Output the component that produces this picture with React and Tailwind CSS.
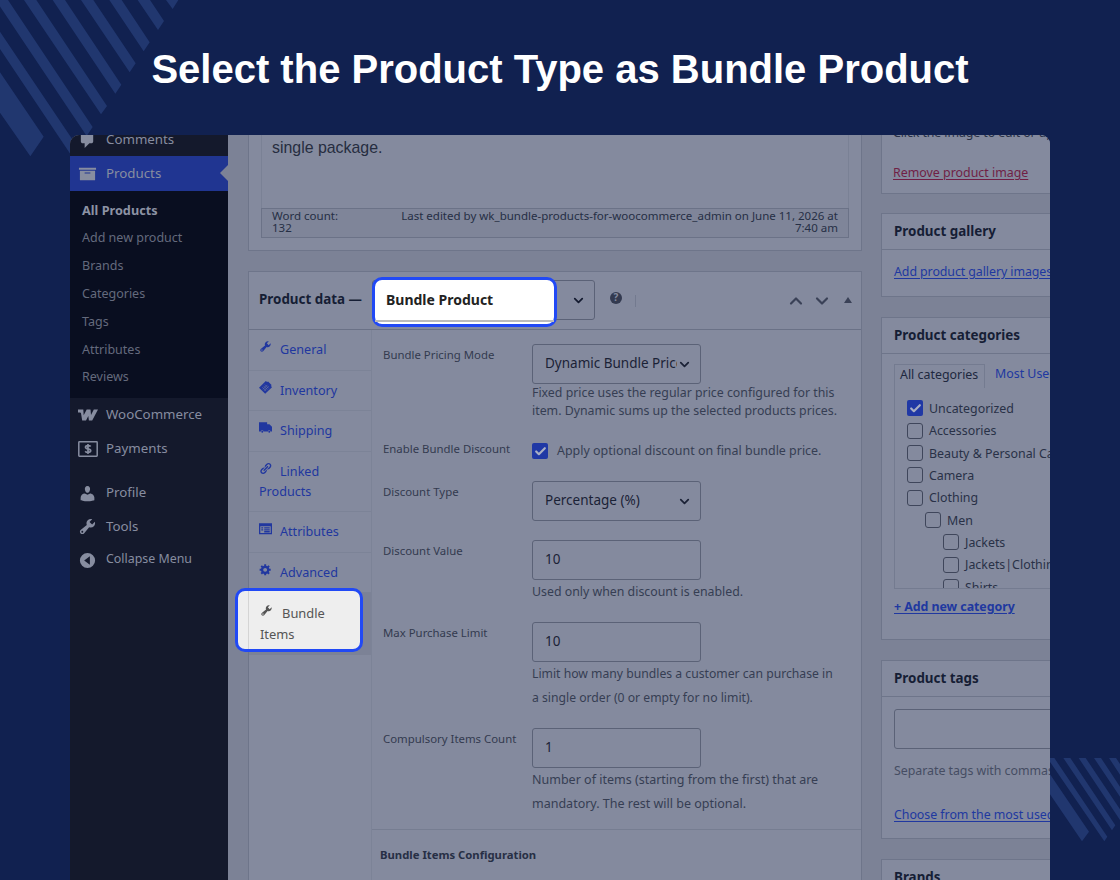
import { ChevronDown, ChevronUp, Check } from "lucide-react";

const ICONS = {
  comments: "M5 2h9q.82 0 1.41.59T16 4v7q0 .82-.59 1.41T14 13h-2l-5 5v-5H5q-.82 0-1.41-.59T3 11V4q0-.82.59-1.41T5 2z",
  archive: "M19 4v2H1V4h18zM2 7h16v10H2V7zm11 3V9H7v1h6z",
  user: "M10 9.25c-2.27 0-2.73-3.44-2.73-3.44C7 4.02 7.82 2 9.97 2c2.16 0 2.98 2.02 2.71 3.81 0 0-.41 3.44-2.68 3.44zM12.72 10c2.39 0 4.52 2.33 4.52 4.53v2.49s-3.65 1.13-7.24 1.13c-3.65 0-7.24-1.13-7.24-1.13v-2.49c0-2.25 1.94-4.48 4.47-4.48L10 11.200z",
  wrench: "M16.68 9.77c-1.34 1.34-3.3 1.67-4.95.99l-5.41 6.52c-.99.99-2.59.99-3.58 0s-.99-2.59 0-3.57l6.52-5.42c-.68-1.65-.35-3.61.99-4.95 1.28-1.28 3.12-1.62 4.72-1.06l-2.89 2.89 2.82 2.82 2.86-2.87c.53 1.58.18 3.39-1.08 4.65zM3.81 16.21c.4.39 1.04.39 1.43 0 .4-.4.4-1.04 0-1.43-.39-.4-1.03-.4-1.43 0-.39.39-.39 1.03 0 1.43z",
  link: "M17.74 2.76c1.68 1.69 1.68 4.41 0 6.1l-1.53 1.52c-1.12 1.12-2.7 1.47-4.14 1.09l2.62-2.61.76-.77.76-.76c.84-.84.84-2.2 0-3.04-.84-.85-2.2-.85-3.04 0l-.77.76-3.38 3.38c-.37-1.44-.02-3.02 1.1-4.14l1.52-1.53c1.69-1.68 4.42-1.68 6.1 0zM8.59 13.43l5.34-5.34c.42-.42.42-1.1 0-1.52-.44-.43-1.13-.39-1.53 0l-5.33 5.34c-.42.42-.42 1.1 0 1.52.44.43 1.13.39 1.52 0zm-.76 2.29l4.14-4.15c.38 1.44.03 3.02-1.09 4.14l-1.52 1.53c-1.69 1.68-4.41 1.68-6.1 0-1.68-1.68-1.68-4.42 0-6.1l1.53-1.52c1.12-1.12 2.7-1.47 4.14-1.1l-4.14 4.15c-.85.84-.85 2.2 0 3.05.84.84 2.2.84 3.04 0z",
  gear: "M18 12h-2.18c-.17.7-.44 1.35-.81 1.93l1.54 1.54-2.1 2.1-1.54-1.54c-.58.36-1.23.63-1.91.79V19H8v-2.18c-.68-.16-1.33-.43-1.91-.79l-1.54 1.54-2.12-2.12 1.54-1.54c-.36-.58-.63-1.23-.79-1.91H1V9.03h2.17c.16-.7.44-1.35.8-1.94L2.43 5.55l2.1-2.1 1.54 1.54c.58-.37 1.24-.64 1.93-.81V2h3v2.18c.68.16 1.33.43 1.91.79l1.54-1.54 2.12 2.12-1.54 1.54c.36.59.64 1.24.8 1.94H18V12zm-8.5 1.5c1.66 0 3-1.34 3-3s-1.34-3-3-3-3 1.34-3 3 1.34 3 3 3z",
  collapse: "M10 2a8 8 0 1 0 0 16 8 8 0 0 0 0-16zm2.500 12.500L6.500 10l6-4.500z",
  truck: "M0 2h12.500v3H16l4 4v7h-2.200a2.100 2.100 0 0 0-4.100 0H7a2.100 2.100 0 0 0-4.100 0H0zM5 15a1.500 1.500 0 1 1 0 3 1.500 1.500 0 0 1 0-3zm10.800 0a1.500 1.500 0 1 1 0 3 1.500 1.500 0 0 1 0-3z",
  table: "M0 2h20v17H0zm2 4.500V17h16V6.500zM3.500 8h3v2h-3zm4.500 0h8.500v2H8zm-4.500 3h3v2h-3zm4.500 0h8.500v2H8zm0 3h8.500v2H8z",
};

const Icon = ({ name, className }) => (
  <svg viewBox="0 0 20 20" fill="currentColor" fillRule="evenodd" className={className}>
    <path d={ICONS[name]} />
  </svg>
);

const TicketIcon = () => (
  <svg viewBox="0 0 20 20" className="h-[13px] w-[13px]">
    <path d="M0 10.500L10.500 0l2 1.500 1.500-.8 5.300 5.300-.8 1.500 1.500 2L9.500 19.500z" fill="currentColor" />
    <path d="M5 9.500l6 6M7 7.500l6 6M9 5.500l6 6M6 13l7-7M8 15l7-7" stroke="#848a9e" strokeWidth=".7" />
  </svg>
);

const WooIcon = () => (
  <svg viewBox="0 0 20 12" className="h-3 w-5">
    <path d="M0 .6h5.300l.4 5.600L8.700.6h3.800l.5 5.500L15.800.6H20l-5.800 10.800h-3.300L10.300 7 8 11.400H4.200L3 4.200C2.900 3.700 2.500 3.500 2 3.500H0z" fill="currentColor" />
  </svg>
);

const PaymentsIcon = () => (
  <svg viewBox="0 0 20 16" className="h-4 w-5" fill="none" stroke="currentColor">
    <rect x=".8" y=".8" width="18.400" height="14.400" rx=".6" strokeWidth="1.500" />
    <path d="M12.700 5.600c-.6-.8-1.600-1-2.700-1-1.500 0-2.500.6-2.500 1.600 0 2.400 5.200 1 5.200 3.600 0 1-1.200 1.600-2.700 1.600-1.200 0-2.200-.4-2.800-1.200M10 3v10" strokeWidth="1.700" />
  </svg>
);

const subMenu = ["Add new product", "Brands", "Categories", "Tags", "Attributes", "Reviews"];

const MenuRow = ({ icon, label, className = "" }) => (
  <div className={`flex items-center h-[34px] pl-[7px] ${className}`}>
    <span className="flex w-[21px] justify-center">{icon}</span>
    <span className="ml-2 text-[13.300px]">{label}</span>
  </div>
);

const Sidebar = () => (
  <aside className="w-[158px] shrink-0 bg-[#14192c] text-[#878da0]">
    <div className="h-[21px] flex flex-col justify-end overflow-hidden">
      <MenuRow icon={<Icon name="comments" className="w-[19px] h-[19px] shrink-0" />} label="Comments" className="shrink-0 !h-[32px]" />
    </div>
    <div className="relative bg-[#203591]">
      <MenuRow icon={<Icon name="archive" className="w-[19px] h-[19px]" />} label="Products" className="!h-[35px]" />
      <span className="absolute right-0 top-[9px] border-y-8 border-r-8 border-y-transparent border-r-[#7c8296]" />
    </div>
    <ul className="bg-[#090e20] h-[207px] pt-[5px] pl-3 text-[12.500px] text-[#646a7d]">
      <li className="h-7 leading-7 text-[12.700px] font-bold text-[#8c92a4]">All Products</li>
      {subMenu.map((item) => (
        <li key={item} className="h-[27.900px] leading-[27.900px]">{item}</li>
      ))}
    </ul>
    <MenuRow icon={<WooIcon />} label="WooCommerce" />
    <MenuRow icon={<PaymentsIcon />} label="Payments" />
    <MenuRow icon={<Icon name="user" className="w-[19px] h-[19px]" />} label="Profile" className="mt-[10px]" />
    <MenuRow icon={<Icon name="wrench" className="w-[19px] h-[19px]" />} label="Tools" className="!h-[33px]" />
    <div className="flex h-[34px] pl-[7px]">
      <span className="flex w-[21px] justify-center pt-[8px]"><Icon name="collapse" className="w-[19px] h-[19px]" /></span>
      <span className="ml-2 text-[12.400px] leading-[32px]">Collapse Menu</span>
    </div>
  </aside>
);

const Editor = () => (
  <section className="h-[116px] border border-t-0 border-[#6e758a] bg-[#848a9e] px-3">
    <div className="h-[73px] border-x border-[#7a8195] px-[10px] pt-[1px] font-['Liberation_Sans',sans-serif] text-[15.900px] text-[#262d40]">
      single package.
    </div>
    <div className="flex h-[30px] justify-between border border-[#6b7287] bg-[#7f8599] px-[10px] pt-[1px] text-[11.530px] leading-[12px] text-[#262f45]">
      <p>Word count:<br />132</p>
      <p className="text-right whitespace-nowrap">
        Last edited by wk_bundle-products-for-woocommerce_admin on June 11, 2026 at<br />7:40 am
      </p>
    </div>
  </section>
);

const tabs = [
  { label: "General", icon: <Icon name="wrench" className="w-[13px] h-[13px]" /> },
  { label: "Inventory", icon: <TicketIcon /> },
  { label: "Shipping", icon: <Icon name="truck" className="w-[13px] h-[13px]" /> },
  { label: "Linked Products", icon: <Icon name="link" className="w-[13px] h-[13px]" />, tall: true },
  { label: "Attributes", icon: <Icon name="table" className="w-[13px] h-[13px]" /> },
  { label: "Advanced", icon: <Icon name="gear" className="w-[13px] h-[13px]" /> },
];

const DataTabs = () => (
  <ul className="w-[123px] shrink-0 border-r border-[#7c8397] text-[12.600px] leading-5 text-[#21379f]">
    {tabs.map(({ label, icon, tall }) => (
      <li key={label} className={`border-b border-[#7c8397] pl-[10px] pt-[10px] ${tall ? "h-[60.500px]" : "h-[40.500px]"}`}>
        <span className="mr-[7px] inline-block w-[14px] align-[1px]">{icon}</span>
        {label}
      </li>
    ))}
    <li className="h-[62px] bg-[#7c8296]" />
  </ul>
);

const Field = ({ label, className = "", children }) => (
  <div className={`flex ${className}`}>
    <span className="w-[149px] shrink-0 text-[11.400px] leading-[21px] text-[#333a4f]">{label}</span>
    <div className="grow text-[12.350px] text-[#363e53]">{children}</div>
  </div>
);

const Input = ({ children, select }) => (
  <div className="flex h-10 w-[169px] items-center rounded-[3px] border border-[#5b6277] pl-3 pr-2 text-[13.500px] text-[#1b2236]">
    <span className="grow overflow-hidden whitespace-nowrap -mt-px">{children}</span>
    {select && <ChevronDown size={15} strokeWidth={2.800} className="shrink-0 mt-[1px]" />}
  </div>
);

const CheckBox = ({ checked }) =>
  checked ? (
    <span className="flex h-4 w-4 shrink-0 items-center justify-center rounded-[2px] bg-[#2038a5] text-[#a9afc4]">
      <Check size={13} strokeWidth={4} />
    </span>
  ) : (
    <span className="h-4 w-4 shrink-0 rounded-[3px] border border-[#3f465b]" />
  );

const DataForm = () => (
  <div className="grow">
    <div className="h-[500px] border-b border-[#767d91] pl-[11px] pt-[14px]">
      <Field label="Bundle Pricing Mode" className="h-[94px]">
        <Input select>Dynamic Bundle Price</Input>
        <p className="leading-[17.500px] whitespace-nowrap">
          Fixed price uses the regular price configured for this<br />
          item. Dynamic sums up the selected products prices.
        </p>
      </Field>
      <Field label="Enable Bundle Discount" className="h-[43px]">
        <div className="flex items-center gap-[9px] pt-[5px] leading-4">
          <CheckBox checked />
          <span className="-mt-[1px] text-[12.450px]">Apply optional discount on final bundle price.</span>
        </div>
      </Field>
      <Field label="Discount Type" className="h-[59px]">
        <Input select>Percentage (%)</Input>
      </Field>
      <Field label="Discount Value" className="h-[82px]">
        <Input>10</Input>
        <p className="leading-[23.500px]">Used only when discount is enabled.</p>
      </Field>
      <Field label="Max Purchase Limit" className="h-[106px]">
        <Input>10</Input>
        <p className="leading-[23.500px] whitespace-nowrap text-[12.200px]">
          Limit how many bundles a customer can purchase in<br />a single order (0 or empty for no limit).
        </p>
      </Field>
      <Field label="Compulsory Items Count">
        <Input>1</Input>
        <p className="leading-[23.500px] whitespace-nowrap text-[12.500px]">
          Number of items (starting from the first) that are<br />mandatory. The rest will be optional.
        </p>
      </Field>
    </div>
    <h3 className="pl-[8px] pt-[15px] text-[11.300px] leading-5 font-bold text-[#272f45]">Bundle Items Configuration</h3>
  </div>
);

const ProductData = () => (
  <section className="mt-5 h-[620px] border border-[#6e758a] bg-[#848a9e]">
    <header className="flex h-[58px] items-center border-b border-[#6a7186] pl-[10px] pr-2 text-[#3a4157]">
      <h2 className="w-[113px] -mt-[3px] text-[13.400px] font-bold whitespace-nowrap text-[#161e35]">Product data —</h2>
      <div className="-mt-[2px] flex h-10 w-[223px] items-center justify-end rounded-[3px] border border-[#5b6277] pr-2 text-[#141b30]">
        <ChevronDown size={15} strokeWidth={2.800} className="mt-[2px]" />
      </div>
      <span className="ml-[15px] -mt-[6px] flex h-3 w-3 items-center justify-center rounded-full bg-[#333a50] text-[10px] font-bold text-[#848a9e]">?</span>
      <span className="ml-[13px] h-3 w-px bg-[#737a8f]" />
      <span className="grow" />
      <ChevronUp size={20} strokeWidth={2.600} />
      <ChevronDown size={20} strokeWidth={2.600} className="ml-[6px]" />
      <span className="ml-[12px] mr-px -mt-[2px] border-x-4 border-b-[6px] border-x-transparent border-b-[#3a4157]" />
    </header>
    <div className="flex h-[560px]">
      <DataTabs />
      <DataForm />
    </div>
  </section>
);

const categories = [
  { name: "Uncategorized", checked: true },
  { name: "Accessories" },
  { name: "Beauty & Personal Care" },
  { name: "Camera" },
  { name: "Clothing" },
  { name: "Men", indent: "ml-[18px]" },
  { name: "Jackets", indent: "ml-[36px]" },
  { name: "Jackets|Clothing", indent: "ml-[36px]" },
  { name: "Shirts", indent: "ml-[36px]" },
];

const Card = ({ title, className, children }) => (
  <section className={`border border-[#6e758a] bg-[#848a9e] ${className}`}>
    <h2 className="h-9 border-b border-[#6e758a] pl-3 text-[13.400px] leading-[34px] font-bold text-[#161e35]">{title}</h2>
    {children}
  </section>
);

const SideCards = () => (
  <div className="ml-[19px] w-[250px] shrink-0 whitespace-nowrap text-[12.400px] text-[#293147]">
    <section className="h-[59px] overflow-hidden border border-t-0 border-[#6e758a] bg-[#848a9e] pl-[11px]">
      <p className="-mt-3 leading-5 tracking-[-0.1px]">Click the image to edit or update</p>
      <p className="mt-5 leading-5 text-[#701f45] underline underline-offset-2">Remove product image</p>
    </section>
    <Card title="Product gallery" className="mt-[19px] h-[84px]">
      <p className="pl-3 pt-[12px] leading-5 tracking-[-0.080px] text-[#2038a0] underline underline-offset-2">Add product gallery images</p>
    </Card>
    <Card title="Product categories" className="mt-5 h-[323px]">
      <div className="mt-[10px] ml-3 flex h-[24px] leading-5">
        <span className="w-[91px] border border-b-0 border-[#747b90] pl-[5px] text-[#20283e]">All categories</span>
        <span className="ml-[10px] text-[#2038a0]">Most Used</span>
      </div>
      <ul className="ml-3 h-[201px] overflow-hidden border border-t-0 border-[#747b90] pl-3 pt-[9px]">
        {categories.map(({ name, checked, indent = "" }) => (
          <li key={name} className={`flex h-[22.350px] items-center gap-[6px] ${indent}`}>
            <CheckBox checked={checked} />
            <span className="mt-[2px]">{name}</span>
          </li>
        ))}
      </ul>
      <p className="pl-3 pt-[8px] leading-5 font-bold tracking-[-0.050px] text-[#2038a0] underline underline-offset-2">+ Add new category</p>
    </Card>
    <Card title="Product tags" className="mt-5 h-[179px]">
      <div className="ml-3 mt-[12px] h-10 rounded-[3px] border border-[#5b6277]" />
      <p className="pl-3 pt-[12px] leading-5 tracking-[-0.040px] text-[#464d63]">Separate tags with commas</p>
      <p className="pl-3 pt-[24px] leading-5 tracking-[-0.040px] text-[#2038a0] underline underline-offset-2">Choose from the most used tags</p>
    </Card>
    <Card title="Brands" className="mt-5" />
  </div>
);

// bright cut-outs that sit on top of the dimmed admin screen
const Spotlights = () => (
  <>
    <div className="absolute left-[302px] top-[142px] h-[50px] w-[185px] rounded-[10px] border-[3px] border-[#2149f5] bg-white">
      <p className="pl-[11px] leading-[39px] text-[14px] font-bold text-[#222]">Bundle Product</p>
      <div className="mt-[1px] h-[2px] bg-[#bbb]" />
    </div>
    <div className="absolute left-[165px] top-[453px] h-[64px] w-[128px] overflow-hidden rounded-[10px] border-[3px] border-[#2149f5] bg-[#eee] text-[12.900px] leading-[21px] text-[#555]">
      <div className="h-full ml-[10px] border-l border-[#d4d4d4] pl-[11px] pt-[12px]">
        <span className="mr-[9px] inline-block w-[13px] align-[1px]"><Icon name="wrench" className="w-[13px] h-[13px]" /></span>
        Bundle<br />Items
      </div>
    </div>
  </>
);

const App = () => {
  return (
    <div className="relative h-[880px] w-[1120px] overflow-hidden bg-[#112150] font-['Noto_Sans','Open_Sans',sans-serif]">
      <svg viewBox="0 0 600 480" className="absolute left-0 top-0 h-40 w-[200px]" fill="#21376f">
        <path d="M498 0h37l-17 27zM413 0h37l42 63-18 27zM328 0h37l84 127-18 27zM243 0h37l127 190-18 27zM158 0h37l169 254-18 27zM72 0h37l212 318-18 25zM-13 0h37l254 381-18 27zM0 95l235 350-18 26L0 147zM0 217l131 193-40 59L0 338z" />
      </svg>
      <svg viewBox="540 354 210 261" className="absolute left-[1050px] top-[758px] h-[87px] w-[70px]" fill="#21376f">
        <path d="M540 403l117 172-21 29-96-141zM532 354h21l159 236-9 14-171-250zM580 354h21l135 202-10 15zM626 354h21l103 154v32zM672 354h21l57 86v30zM717 354h21l12 18v32z" />
      </svg>
      <h1 className="relative h-[135px] pt-[2px] text-center font-['Liberation_Sans',sans-serif] text-[40px] leading-[134px] font-bold text-white">
        Select the Product Type as Bundle Product
      </h1>
      <main className="relative mx-[70px] flex h-[745px] overflow-hidden rounded-t-[9px] bg-[#7c8296]">
        <Sidebar />
        <div className="ml-5 w-[614px] shrink-0">
          <Editor />
          <ProductData />
        </div>
        <SideCards />
        <Spotlights />
      </main>
    </div>
  );
};

export default App;
